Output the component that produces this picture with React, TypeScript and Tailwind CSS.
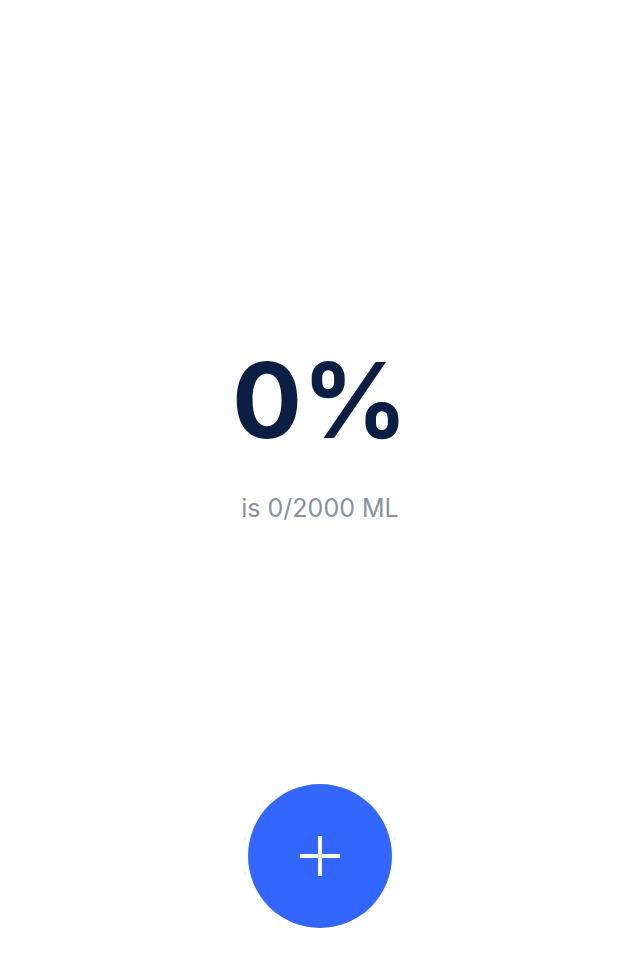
export default function App() {
  return (
    <div
      className="flex h-[969px] w-full flex-col items-center bg-white"
      style={{ fontFamily: 'Inter, "Noto Sans", sans-serif' }}
    >
      <div className="flex flex-1 flex-col items-center justify-center pt-[84px]">
        <h1 className="text-[104px] font-bold leading-none text-[#0b1f44]">0%</h1>
        <p className="mt-[44px] text-[25px] leading-none text-[#8a929e]">is 0/2000 ML</p>
      </div>
      <button
        type="button"
        aria-label="Add"
        className="mb-[41px] flex h-[144px] w-[144px] items-center justify-center rounded-full bg-[#3366ff]"
      >
        <svg width="40" height="40" viewBox="0 0 40 40" fill="none" stroke="white" strokeWidth="4">
          <path d="M20 0v40M0 20h40" />
        </svg>
      </button>
    </div>
  );
}
